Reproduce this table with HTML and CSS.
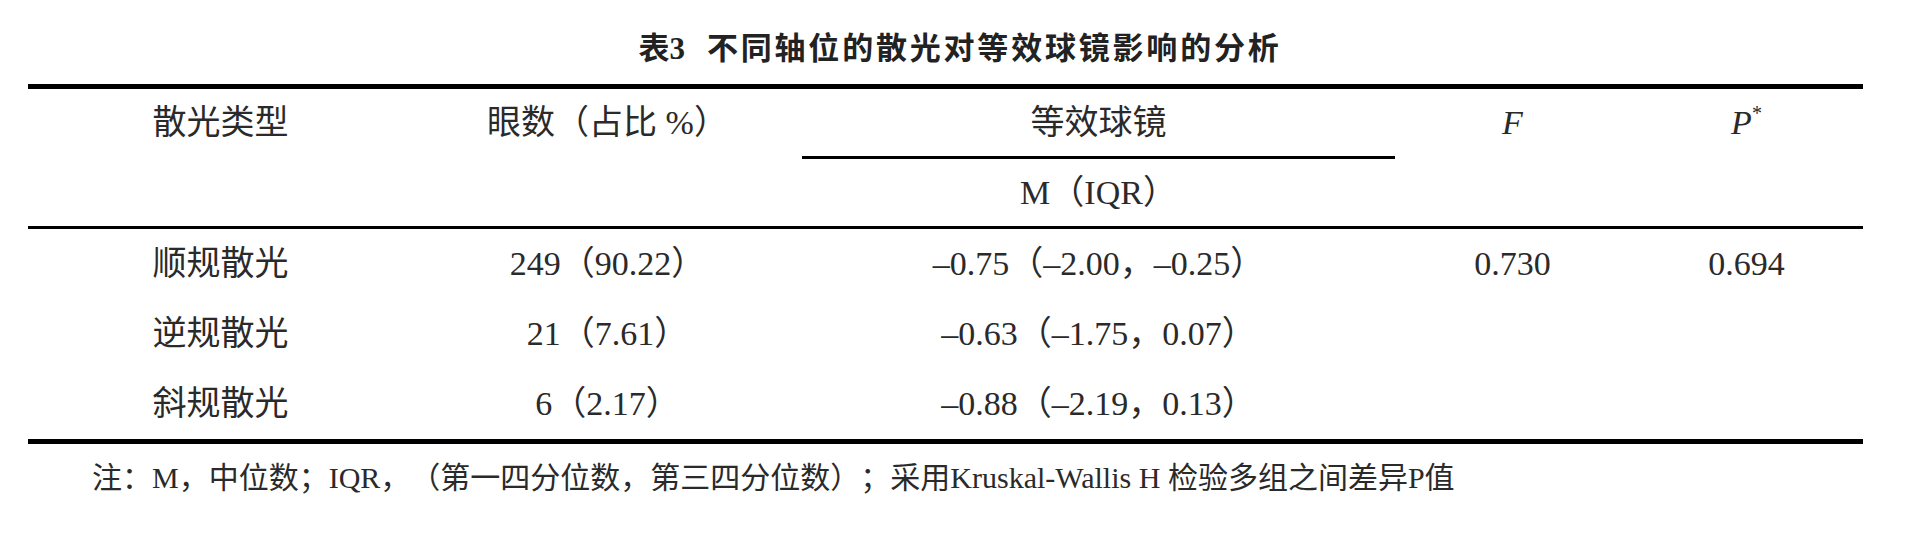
FILE: index.html
```html
<!DOCTYPE html>
<html lang="zh-CN">
<head>
<meta charset="utf-8">
<title>表3 不同轴位的散光对等效球镜影响的分析</title>
<link rel="stylesheet" href="styles.css">
</head>
<body>
<div class="page">
  <h1 class="title"><span class="title-no">表<span class="latin">3</span></span><span class="title-text">不同轴位的散光对等效球镜影响的分析</span></h1>
  <div class="table">
    <div class="thead">
      <div class="th span2">散光类型</div>
      <div class="th span2">眼数（占比 %）</div>
      <div class="th">等效球镜</div>
      <div class="th span2 it">F</div>
      <div class="th span2 it">P<sup class="star">*</sup></div>
      <div class="th sub">M（IQR）</div>
    </div>
    <div class="tbody">
      <div class="td">顺规散光</div>
      <div class="td">249（90.22）</div>
      <div class="td">–0.75（–2.00，–0.25）</div>
      <div class="td">0.730</div>
      <div class="td">0.694</div>

      <div class="td">逆规散光</div>
      <div class="td">21（7.61）</div>
      <div class="td">–0.63（–1.75，0.07）</div>
      <div class="td"></div>
      <div class="td"></div>

      <div class="td">斜规散光</div>
      <div class="td">6（2.17）</div>
      <div class="td">–0.88（–2.19，0.13）</div>
      <div class="td"></div>
      <div class="td"></div>
    </div>
  </div>
  <p class="note">注：M，中位数；IQR，（第一四分位数，第三四分位数）；采用Kruskal-Wallis H 检验多组之间差异P值</p>
</div>
</body>
</html>
```

FILE: styles.css
```css
html, body {
  margin: 0;
  padding: 0;
  background: #ffffff;
}

body {
  font-family: "Liberation Serif", "Noto Sans CJK SC", serif;
  color: #2a2a2a;
  text-spacing-trim: space-all;
}

.page {
  width: 1920px;
  padding: 28px 0 0 28px;
  box-sizing: border-box;
}

.title {
  margin: 0 0 20px 0;
  padding-right: 28px;
  height: 36px;
  line-height: 36px;
  text-align: center;
  font-family: "Noto Sans CJK SC", sans-serif;
  font-weight: 700;
  font-size: 31px;
  color: #222;
}

.title-no {
  margin-right: 22px;
}

.title-no .latin {
  font-family: "Liberation Serif", serif;
  font-weight: 700;
  font-size: 31px;
}

.title-text {
  letter-spacing: 2.8px;
}

.table {
  width: 1835px;
  border-top: 5px solid #000;
  border-bottom: 5px solid #000;
  font-size: 34px;
}

.thead,
.tbody {
  display: grid;
  grid-template-columns: 385px 389px 593px 235px 233px;
}

.thead {
  grid-template-rows: 67px 70px;
  border-bottom: 3px solid #000;
}

.tbody {
  grid-auto-rows: 70px;
}

.th,
.td {
  text-align: center;
  line-height: 67px;
  white-space: nowrap;
}

.td {
  line-height: 70px;
}

.th.span2 {
  grid-row: span 2;
}

.th.sub {
  grid-column: 3;
  grid-row: 2;
  border-top: 3px solid #000;
  line-height: 67px;
}

.it {
  font-style: italic;
  font-family: "Liberation Serif", serif;
  font-size: 34px;
}

.star {
  font-size: 20px;
  font-style: normal;
  vertical-align: 14px;
  line-height: 0;
}

.note {
  margin: 14px 0 0 64px;
  line-height: 40px;
  font-size: 30px;
  color: #2a2a2a;
}
```
